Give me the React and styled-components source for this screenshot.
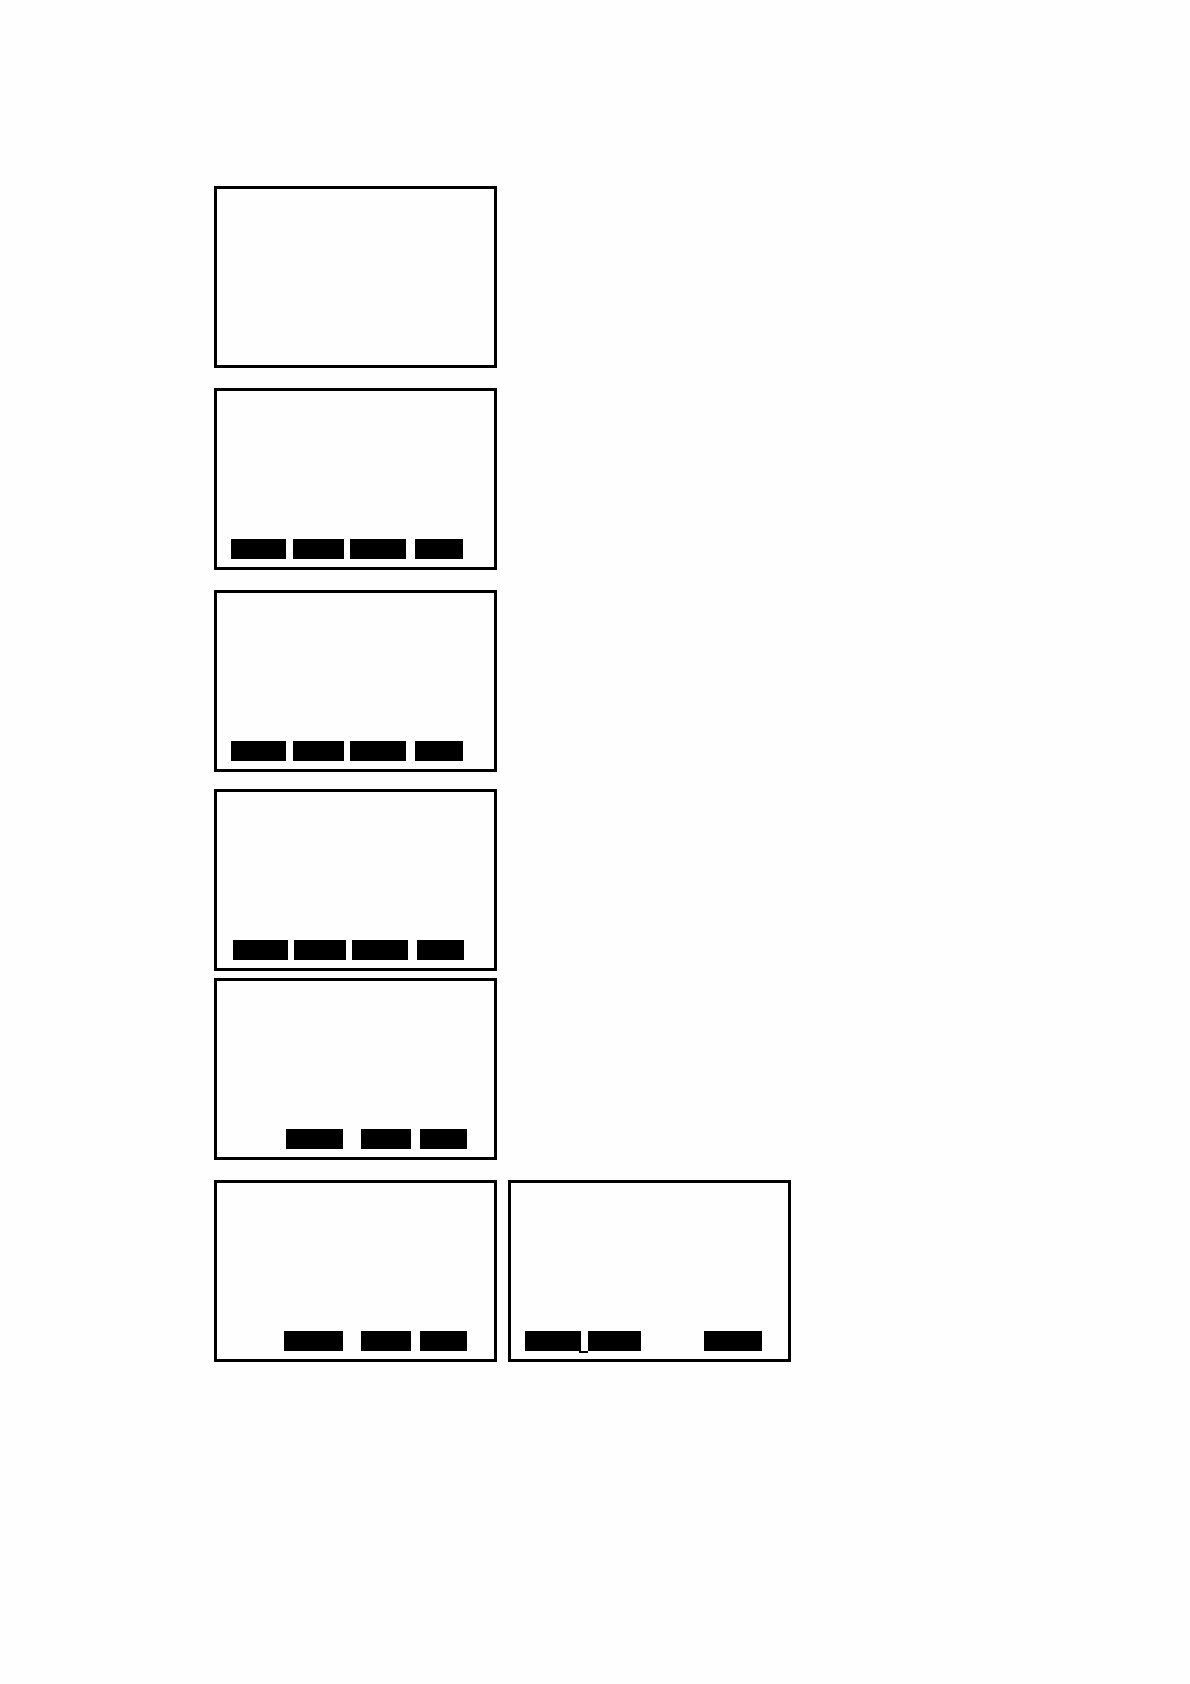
import React from 'react';
import styled, {createGlobalStyle, css} from 'styled-components';

const ink = '#000';
const paper = '#fefefe';

const spacing = {
  none: 0,
  tight: 7,
  snug: 17,
  normal: 20,
}

const GlobalStyle = createGlobalStyle`
  * {
    box-sizing: border-box;
  }
  body {
    margin: 0;
    background: ${paper};
    font-family: "Liberation Sans", Arial, sans-serif;
  }
`;

const Page = styled.main`
  display: flex;
  flex-direction: column;
  padding: 186px 24px 186px 214px;
`;

const ScreenRow = styled.section`
  display: flex;
  flex-wrap: wrap;
  gap: 11px;
  margin-top: ${({ $space }) => spacing[$space]}px;
`;

const Display = styled.div`
  display: flex;
  align-items: flex-end;
  flex: 0 1 283px;
  min-height: 182px;
  padding-bottom: 8px;
  border: 3px solid ${ink};
  background: ${paper};
`;

// underscore cursor that hangs off the right end of a key
const cursor = css`
  &::after {
    content: '';
    position: absolute;
    right: -7px;
    bottom: -2px;
    width: 9px;
    height: 2px;
    background: ${ink};
  }
`;

const SoftKey = styled.button`
  position: relative;
  flex: 0 1 ${({ $width }) => $width}px;
  height: 20px;
  margin: 0 0 0 ${({ $before }) => $before}px;
  padding: 0;
  border: 0;
  border-radius: 0;
  background: ${ink};
  cursor: pointer;

  ${({ $cursor }) => $cursor && cursor}
`;

// every key is [space before it, width]
const fourKeys = [[14, 55], [7, 51], [6, 56], [9, 48]];
const fourKeysInset = [[16, 55], [6, 52], [6, 56], [9, 47]];
const threeKeys = [[69, 57], [18, 50], [9, 47]];
const threeKeysWide = [[67, 59], [18, 50], [9, 47]];
const entryKeys = [[14, 56], [7, 53], [63, 58]];

const rows = [
  { space: 'none', screens: [{ keys: [] }] },
  { space: 'normal', screens: [{ keys: fourKeys }] },
  { space: 'normal', screens: [{ keys: fourKeys }] },
  { space: 'snug', screens: [{ keys: fourKeysInset }] },
  { space: 'tight', screens: [{ keys: threeKeys }] },
  { space: 'normal', screens: [{ keys: threeKeysWide }, { keys: entryKeys, cursorAt: 0 }] },
];

const Screen = ({ keys, cursorAt }) => (
  <Display>
    {keys.map(([before, width], i) => (
      <SoftKey
        key={i}
        type="button"
        aria-label={`Soft key ${i + 1}`}
        $before={before}
        $width={width}
        $cursor={i === cursorAt}
      />
    ))}
  </Display>
);

const App = () => (
  <>
    <GlobalStyle />
    <Page>
      {rows.map(({ space, screens }, i) => (
        <ScreenRow key={i} $space={space}>
          {screens.map((screen, j) => (
            <Screen key={j} {...screen} />
          ))}
        </ScreenRow>
      ))}
    </Page>
  </>
);

export default App;
